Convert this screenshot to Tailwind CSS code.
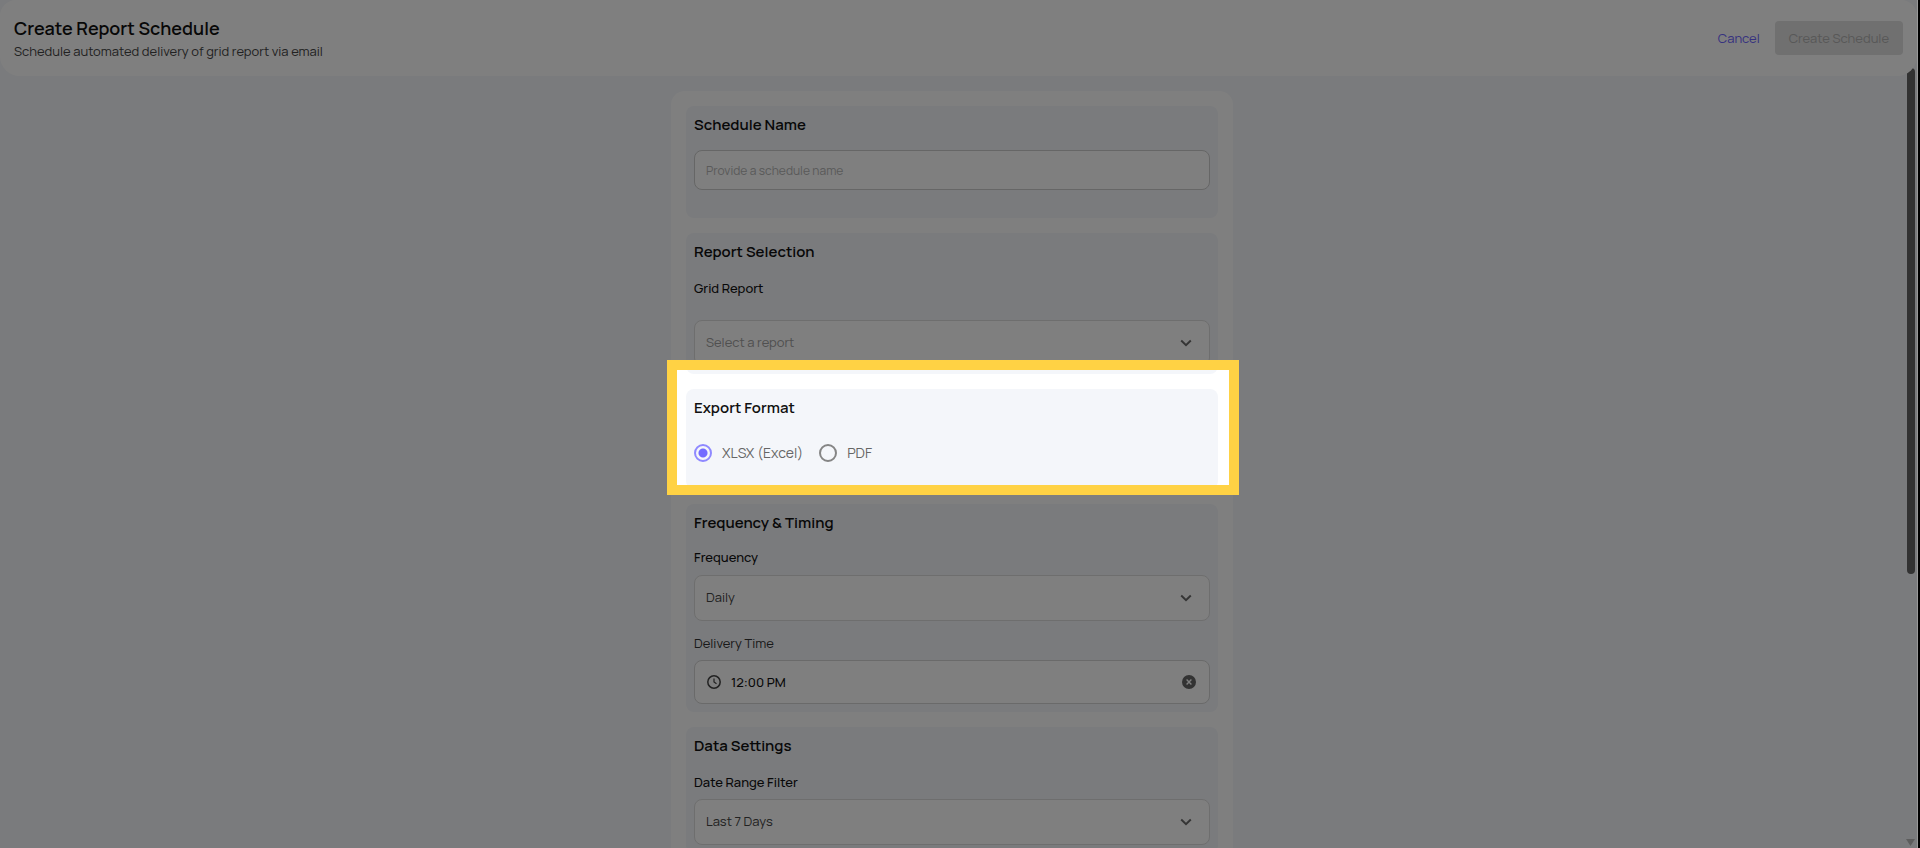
<!DOCTYPE html>
<html lang="en">
<head>
    <meta charset="UTF-8">
    <meta name="viewport" content="width=device-width, initial-scale=1.0">
    <title>Create Report Schedule</title>

    <!-- Tailwind CSS for styling -->
    <script src="https://cdn.jsdelivr.net/npm/@tailwindcss/browser@4"></script>
</head>
<body class="h-screen overflow-hidden bg-black pr-[2px] font-['Manrope','Inter',sans-serif] text-[#111111]">
    <div class="flex h-full flex-col overflow-hidden border-r border-[#999999] bg-[#f5f7fa]">
        <header class="relative flex h-[76px] shrink-0 items-center justify-between rounded-[20px] rounded-t-[16px] bg-white pr-[14px] pb-px pl-[14px]">
            <div>
                <h1 class="text-[18px] leading-[26px] font-semibold">Create Report Schedule</h1>
                <p class="text-[13px] leading-5 text-[#444444]">Schedule automated delivery of grid report via email</p>
            </div>
            <div class="flex items-center gap-[15px]">
                <button type="button" class="text-[13px] leading-5 text-[#6c63ff]">Cancel</button>
                <button type="button" disabled class="h-[34px] rounded bg-[#e0e0e0] px-[14px] text-[13px] leading-5 text-[#b0b0b0]">Create Schedule</button>
            </div>
        </header>

        <div class="flex min-h-0 flex-1">
            <main class="min-w-0 flex-1 pt-[15px]">
                <form class="mx-auto flex w-full max-w-[562px] flex-col gap-[15px] rounded-[14px] bg-white p-[15px]">
                    <!-- Schedule name -->
                    <section class="rounded-lg bg-[#f4f6fa] px-2 pt-2 pb-7">
                        <h2 class="text-[15px] leading-[22px] font-semibold"><label for="schedule-name">Schedule Name</label></h2>
                        <input id="schedule-name" type="text" placeholder="Provide a schedule name"
                            class="mt-[14px] block h-10 w-full rounded-lg border border-[#cccccc] bg-white px-[11px] text-[12px] placeholder:text-[#b4b4b4]">
                    </section>

                    <!-- Report selection -->
                    <section class="rounded-lg bg-[#f4f6fa] px-2 pt-2 pb-2">
                        <h2 class="text-[15px] leading-[22px] font-semibold">Report Selection</h2>
                        <label for="grid-report" class="mt-[15px] block text-[13px] leading-5 font-medium">Grid Report</label>
                        <div class="relative mt-[22px]">
                            <select id="grid-report" class="block h-[46px] w-full appearance-none rounded-lg border border-[#dddddd] bg-white px-[11px] text-[13px] text-[#a0a0a0]">
                                <option>Select a report</option>
                            </select>
                            <svg class="pointer-events-none absolute top-[17px] right-[18px] h-3 w-3" viewBox="0 0 12 12" fill="none" stroke="#6a6a6a" stroke-width="2"><path d="M1.2 3.5 6 8.2l4.8-4.7"/></svg>
                        </div>
                    </section>

                    <!-- Export format, with the tour spotlight around it -->
                    <section class="relative rounded-lg bg-[#f4f6fa] px-2 pt-2 pb-[26px]">
                        <div class="pointer-events-none absolute -top-[29px] -right-[21px] -bottom-[6px] -left-[19px] z-10 border-10 border-[#ffd244] shadow-[0_0_0_3000px_rgba(0,0,0,0.5)]"></div>
                        <h2 class="text-[15px] leading-[22px] font-semibold">Export Format</h2>
                        <div class="mt-6 flex items-center gap-4 text-[14px] leading-5 text-[#666666]">
                            <label class="flex items-center gap-[10px]">
                                <input type="radio" name="format" checked class="h-[18px] w-[18px] appearance-none rounded-full border-2 border-[#8f89ff] bg-[#f4f6fa] bg-[radial-gradient(circle,#736bff_4px,transparent_5px)]">
                                XLSX (Excel)
                            </label>
                            <label class="flex items-center gap-[10px]">
                                <input type="radio" name="format" class="h-[18px] w-[18px] appearance-none rounded-full border-2 border-[#858585]">
                                PDF
                            </label>
                        </div>
                    </section>

                    <!-- Frequency & timing -->
                    <section class="rounded-lg bg-[#f4f6fa] px-2 pt-2 pb-2">
                        <h2 class="text-[15px] leading-[22px] font-semibold">Frequency &amp; Timing</h2>
                        <label for="frequency" class="mt-[13px] block text-[13px] leading-5 font-medium">Frequency</label>
                        <div class="relative mt-2">
                            <select id="frequency" class="block h-[46px] w-full appearance-none rounded-lg border border-[#dddddd] bg-white px-[11px] text-[13px] text-[#444444]">
                                <option>Daily</option>
                            </select>
                            <svg class="pointer-events-none absolute top-[17px] right-[18px] h-3 w-3" viewBox="0 0 12 12" fill="none" stroke="#6a6a6a" stroke-width="2"><path d="M1.2 3.5 6 8.2l4.8-4.7"/></svg>
                        </div>
                        <label for="delivery-time" class="mt-3 block text-[13px] leading-5 text-[#333333]">Delivery Time</label>
                        <div class="mt-[7px] flex h-11 items-center rounded-lg border border-[#d4d4d4] bg-white pr-[13px] pl-3">
                            <svg class="h-[14px] w-[14px]" viewBox="0 0 14 14" fill="none" stroke="#444444" stroke-width="1.5"><circle cx="7" cy="7" r="6.2"/><path d="M7 3.5V7l2.5 1.8" stroke-width="1.2"/></svg>
                            <input id="delivery-time" type="text" value="12:00 PM" class="ml-[10px] min-w-0 flex-1 text-[13px] leading-5 font-medium">
                            <button type="button" aria-label="Clear time">
                                <svg class="h-[14px] w-[14px]" viewBox="0 0 14 14"><circle cx="7" cy="7" r="7" fill="#666666"/><path d="m4.6 4.6 4.8 4.8m0-4.8L4.6 9.4" stroke="#ffffff" stroke-width="1.4"/></svg>
                            </button>
                        </div>
                    </section>

                    <!-- Data settings -->
                    <section class="rounded-lg bg-[#f4f6fa] px-2 pt-2 pb-2">
                        <h2 class="text-[15px] leading-[22px] font-semibold">Data Settings</h2>
                        <label for="date-range" class="mt-[15px] block text-[13px] leading-5 font-medium">Date Range Filter</label>
                        <div class="relative mt-[7px]">
                            <select id="date-range" class="block h-[46px] w-full appearance-none rounded-lg border border-[#dddddd] bg-white px-[11px] text-[13px] text-[#444444]">
                                <option>Last 7 Days</option>
                            </select>
                            <svg class="pointer-events-none absolute top-[17px] right-[18px] h-3 w-3" viewBox="0 0 12 12" fill="none" stroke="#6a6a6a" stroke-width="2"><path d="M1.2 3.5 6 8.2l4.8-4.7"/></svg>
                        </div>
                    </section>
                </form>
            </main>

            <!-- Scroll bar -->
            <div class="-mt-2 flex w-[13px] shrink-0 flex-col items-center justify-between pb-[2px]">
                <div class="h-[65%] w-2 rounded-full bg-[#646464]"></div>
                <svg class="h-[7px] w-[9px]" viewBox="0 0 9 7"><path d="M0 0h9L4.5 7z" fill="#bbbbbb"/></svg>
            </div>
        </div>
    </div>
</body>
</html>
